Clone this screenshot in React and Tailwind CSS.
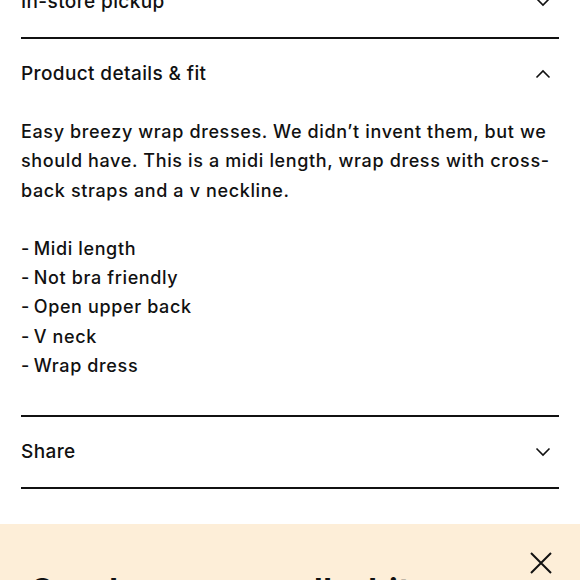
import React from 'react';

const Chevron = ({ up = false }) => (
  <svg width="16" height="10" viewBox="0 0 16 10" fill="none" className="shrink-0">
    <path
      d={up ? 'M1.5 8.5L8 2L14.5 8.5' : 'M1.5 1.5L8 8L14.5 1.5'}
      stroke="#111"
      strokeWidth="1.6"
    />
  </svg>
);

function Row({ title, open = false }) {
  return (
    <div className="flex h-[70px] items-center justify-between pr-[8px]">
      <span className="text-[19px] font-medium tracking-[0.02em]">{title}</span>
      <Chevron up={open} />
    </div>
  );
}

export default function App() {
  const bullets = ['Midi length', 'Not bra friendly', 'Open upper back', 'V neck', 'Wrap dress'];

  return (
    <div
      className="h-[580px] w-[580px] overflow-hidden bg-white text-[#111]"
      style={{ fontFamily: 'Inter, "Liberation Sans", Arial, sans-serif' }}
    >
      <div className="-mt-[33px] px-[21px]">
        <Row title="In-store pickup" />
        <div className="border-t-2 border-[#111]">
          <Row title="Product details & fit" open />
          <div className="pb-[35px] pt-[8px] text-[18px] font-medium leading-[29.3px] tracking-[0.035em]">
            <p>
              Easy breezy wrap dresses. We didn’t invent them, but we should have. This is a
              midi length, wrap dress with cross-back straps and a v neckline.
            </p>
            <ul className="mt-[29px]">
              {bullets.map((b) => (
                <li key={b}>-&thinsp;{b}</li>
              ))}
            </ul>
          </div>
        </div>
        <div className="border-y-2 border-[#111]">
          <Row title="Share" />
        </div>
      </div>

      {/* email signup banner */}
      <div className="mt-[35px] h-[120px] bg-[#fdeed8] pl-[30px] pr-[28px] pt-[28px]">
        <div className="flex items-start justify-between">
          <h2 className="mt-[15px] text-[32px] font-bold tracking-[0.02em]">
            Our dresses are all a bit Reformation
          </h2>
          <svg width="22" height="22" viewBox="0 0 22 22" className="shrink-0">
            <path d="M1 1L21 21M21 1L1 21" stroke="#111" strokeWidth="2" />
          </svg>
        </div>
      </div>
    </div>
  );
}
